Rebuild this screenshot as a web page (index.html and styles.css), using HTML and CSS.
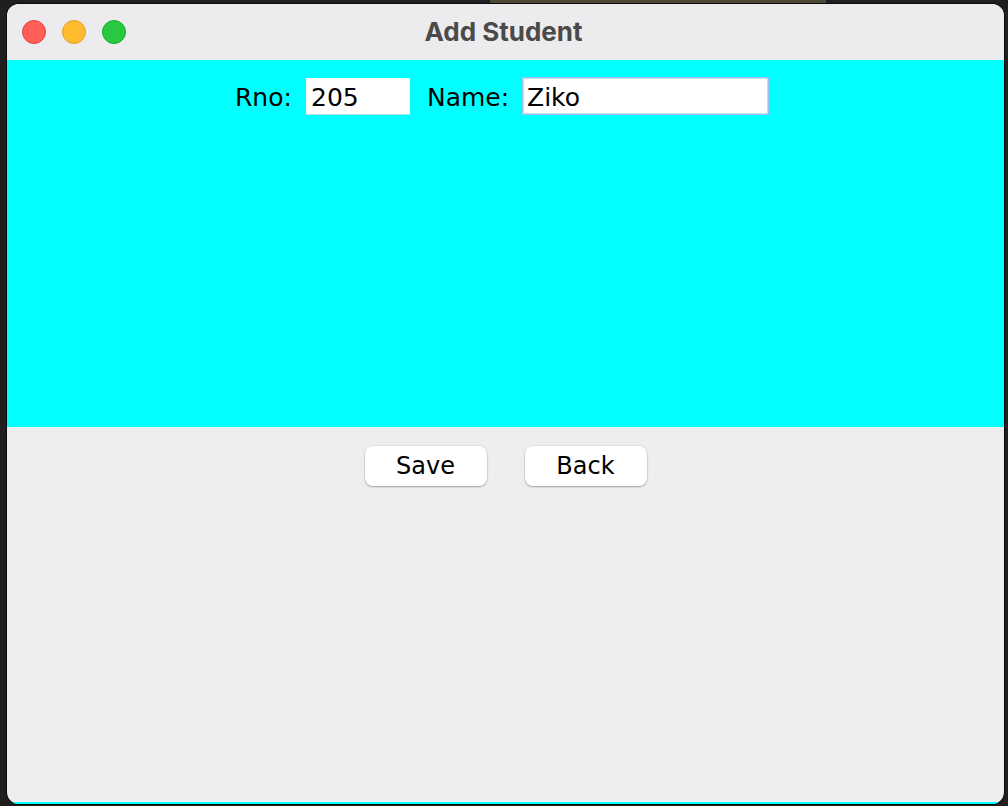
FILE: index.html
```html
<!DOCTYPE html>
<html lang="en">
<head>
<meta charset="utf-8">
<title>Add Student</title>
<link rel="stylesheet" href="styles.css">
</head>
<body>
<div class="window">
  <div class="titlebar">
    <div class="lights">
      <span class="light red"></span>
      <span class="light yellow"></span>
      <span class="light green"></span>
    </div>
    <div class="title">Add Student</div>
  </div>
  <div class="form-panel">
    <div class="form-row">
      <label class="label label-rno">Rno:</label>
      <div class="field field-rno">205</div>
      <label class="label label-name">Name:</label>
      <div class="field field-name focused">Ziko</div>
    </div>
  </div>
  <div class="button-panel">
    <button class="btn">Save</button>
    <button class="btn">Back</button>
  </div>
</div>
</body>
</html>
```

FILE: styles.css
```css
html, body {
  margin: 0;
  padding: 0;
  height: 100%;
  overflow: hidden;
}

body {
  background:
    linear-gradient(#4e4937, #4e4937) 490px 0 / 336px 4px no-repeat,
    #1f1f1f;
  font-family: "DejaVu Sans", "Liberation Sans", sans-serif;
}

.window {
  margin: 4px 0 0 7px;
  width: 997px;
  height: 800px;
  border-radius: 12px;
  overflow: hidden;
  display: flex;
  flex-direction: column;
  background: #eeeeee;
  box-shadow: 0 0 0 1px #0b0b0b;
}

.titlebar {
  height: 56px;
  flex: none;
  background: #ececee;
  position: relative;
  display: flex;
  align-items: center;
  justify-content: center;
}

.lights {
  position: absolute;
  left: 15px;
  top: 16px;
  display: flex;
  gap: 16px;
}

.light {
  width: 24px;
  height: 24px;
  border-radius: 50%;
  box-sizing: border-box;
}

.red { background: #ff5f57; border: 1px solid #e0443e; }
.yellow { background: #febc2e; border: 1px solid #dea123; }
.green { background: #28c840; border: 1px solid #1aab29; }

.title {
  font-family: Inter, "Liberation Sans", sans-serif;
  font-weight: 700;
  font-size: 26px;
  color: #4a4a4a;
  margin-left: -4px;
  margin-top: -2px;
}

.form-panel {
  height: 367px;
  flex: none;
  background: #00ffff;
}

.form-row {
  display: flex;
  align-items: center;
  padding: 17px 0 0 228px;
}

.label {
  font-size: 25px;
  color: #000;
  white-space: nowrap;
  padding-top: 3px;
}

.label-rno { width: 54px; margin-right: 17px; }
.label-name { width: 79px; margin-left: 17px; margin-right: 16px; }

.field {
  background: #fff;
  box-sizing: border-box;
  font-size: 25px;
  color: #000;
  padding-left: 5px;
  padding-top: 3px;
  display: flex;
  align-items: center;
}

.field-rno {
  width: 104px;
  height: 36px;
  box-shadow: 0 1px 0 #b9dcdc;
}

.field-name {
  width: 247px;
  height: 38px;
  padding-left: 4px;
}

.focused {
  border: 1px solid #9cc3f2;
  box-shadow: inset 0 0 0 1px #c4dcf8;
}

.button-panel {
  flex: 1;
  display: flex;
  justify-content: center;
  align-items: flex-start;
  gap: 38px;
  padding-top: 19px;
  border-bottom: 2px solid #00ffff;
}

.btn {
  width: 122px;
  height: 40px;
  background: #fff;
  border: none;
  border-radius: 8px;
  box-shadow: 0 1px 2px rgba(0, 0, 0, 0.3), 0 0 0 0.5px rgba(0, 0, 0, 0.08);
  font-family: "DejaVu Sans", "Liberation Sans", sans-serif;
  font-size: 24px;
  color: #000;
  padding: 0;
}
```
